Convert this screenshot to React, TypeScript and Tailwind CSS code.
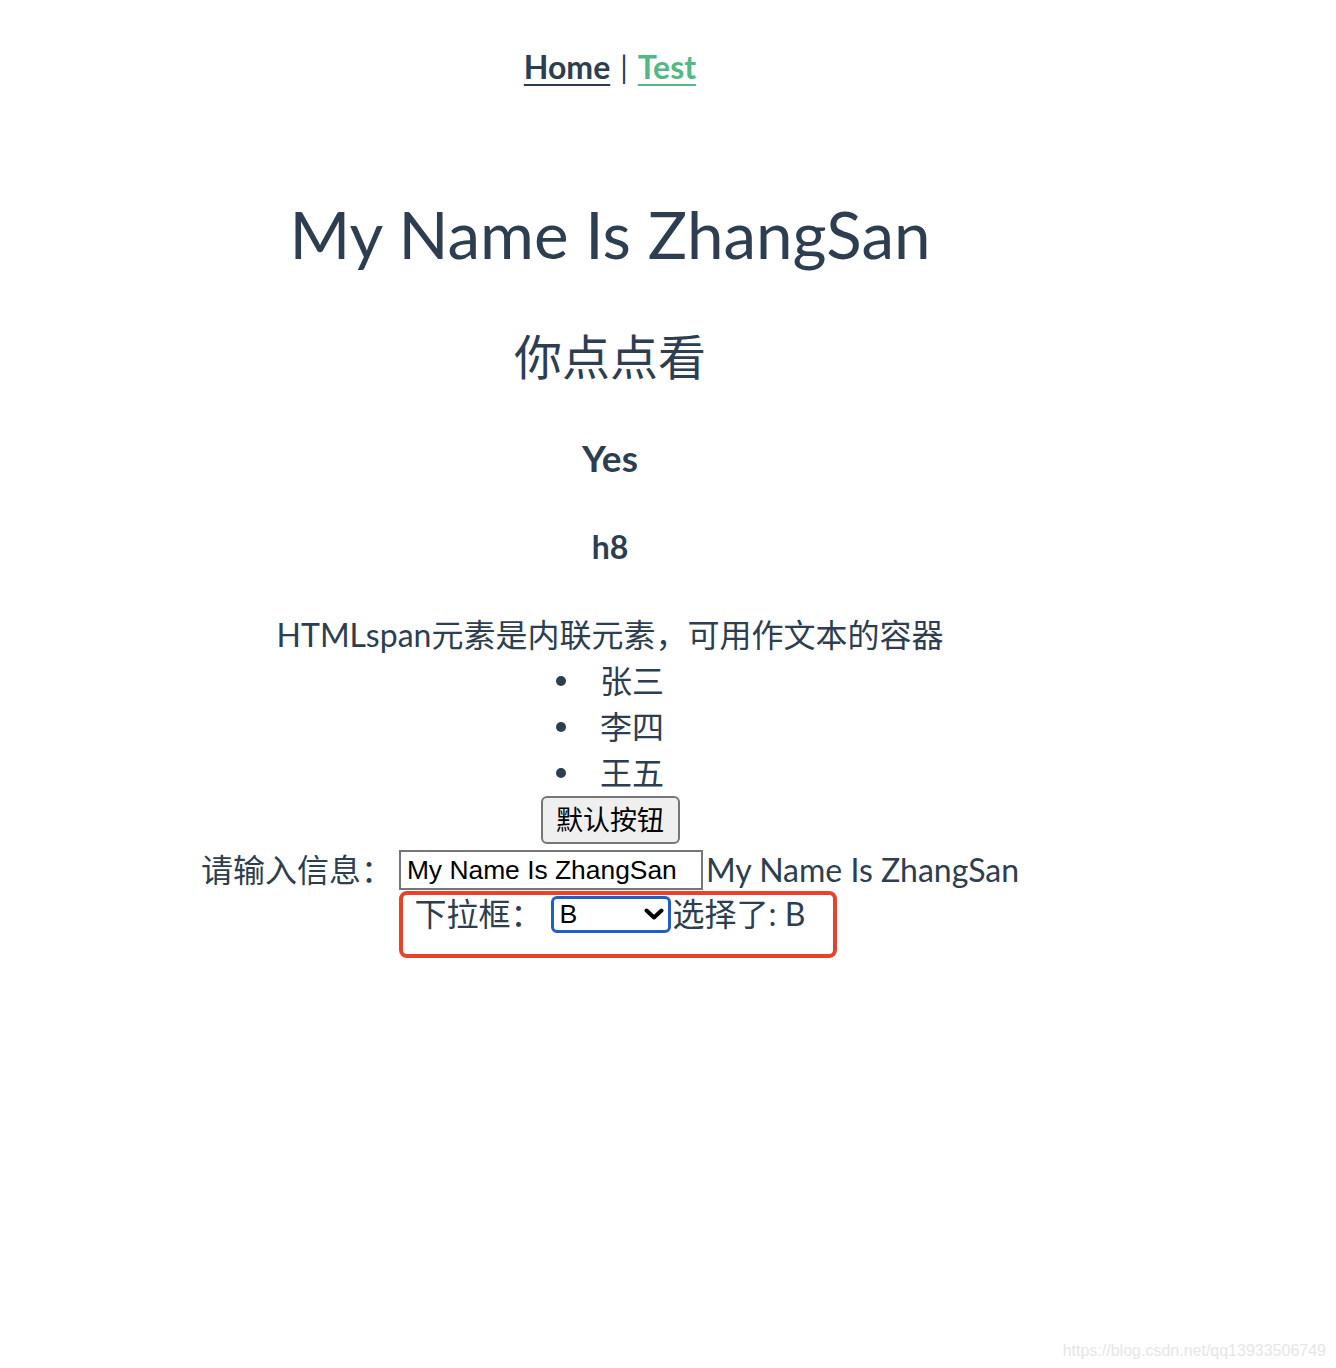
import { useState } from 'react';

const avenir = "font-['Lato','Noto_Sans_CJK_SC',sans-serif]";
const arial = "font-['Liberation_Sans','Noto_Sans_CJK_SC',sans-serif]";

const people = ['张三', '李四', '王五'];

function Nav() {
  return (
    <div className={`pt-[48px] leading-[38px] text-[32px] font-bold ${avenir}`}>
      <a href="#" className="underline underline-offset-[5px] decoration-2 text-[#2c3e50]">
        Home
      </a>
      <span className="mx-[10px] font-normal text-[30px] text-[#2c3e50]">|</span>
      <a href="#" className="underline underline-offset-[5px] decoration-2 text-[#52b985]">
        Test
      </a>
    </div>
  );
}

export default function App() {
  const [msg, setMsg] = useState('My Name Is ZhangSan');
  const [choice, setChoice] = useState('B');

  return (
    <div className="relative min-h-[1368px] bg-white">
      <div className={`w-[1220px] text-center text-[#2c3e50] antialiased ${avenir}`}>
        <Nav />

        <h1 className="mt-[110px] text-[65.5px] leading-[76px] font-normal">My Name Is ZhangSan</h1>
        <h2 className="mt-[57px] text-[48px] leading-[56px] font-normal">你点点看</h2>
        <h3 className="mt-[51px] text-[37px] leading-[44px] font-bold">Yes</h3>
        <h4 className="mt-[48px] text-[32px] leading-[38px] font-bold">h8</h4>

        <div className="mt-[46px] text-[32px] leading-[46px]">
          <span>HTMLspan元素是内联元素，可用作文本的容器</span>
        </div>

        <ul className="flex flex-col items-center text-[32px] leading-[46px]">
          {people.map((p) => (
            <li key={p} className="flex items-center">
              <span className="mr-[34px] w-[10px] h-[10px] rounded-full bg-[#2c3e50]" />
              <span>{p}</span>
            </li>
          ))}
        </ul>

        <div className="flex justify-center">
          <button
            className={`h-[48px] w-[139px] rounded-[6px] border-2 border-[#767676] bg-[#efefef] pt-[3px] text-[27px] text-black ${arial}`}
          >
            默认按钮
          </button>
        </div>

        <div className="mt-[4px] flex items-center justify-center h-[44px] text-[32px]">
          <span>请输入信息：</span>
          <input
            value={msg}
            onChange={(e) => setMsg(e.target.value)}
            className={`ml-[6px] w-[304px] h-[40px] border-2 border-[#767676] px-[6px] text-[26.4px] text-black outline-none ${arial}`}
          />
          <span className="ml-[3px]">{msg}</span>
        </div>

        <div className="flex items-center justify-center h-[44px] text-[32px]">
          <span>下拉框：</span>
          <div className="relative ml-[8px] flex">
            <select
              value={choice}
              onChange={(e) => setChoice(e.target.value)}
              className={`appearance-none w-[120px] h-[37px] rounded-[6px] border-[3px] border-[#1f5fc8] bg-white pl-[6px] text-[26.7px] leading-[30px] text-black outline-none ${arial}`}
            >
              <option value="A">A</option>
              <option value="B">B</option>
              <option value="C">C</option>
            </select>
            <svg
              className="pointer-events-none absolute right-[7px] top-[12px]"
              width="20"
              height="12"
              viewBox="0 0 20 12"
            >
              <path d="M2.5 2.5 L10 9.5 L17.5 2.5" fill="none" stroke="black" strokeWidth="4" strokeLinecap="round" strokeLinejoin="round" />
            </svg>
          </div>
          <span className="ml-[2px]">选择了: {choice}</span>
        </div>
      </div>

      {/* annotation box drawn over the select row */}
      <div className="absolute left-[399px] top-[891px] w-[438px] h-[67px] rounded-[8px] border-[4px] border-[#e8412c] pointer-events-none" />

      <div className={`absolute right-[10px] bottom-[5px] text-[16px] text-[#e6e6e6] ${arial}`}>
        https://blog.csdn.net/qq13933506749
      </div>
    </div>
  );
}
